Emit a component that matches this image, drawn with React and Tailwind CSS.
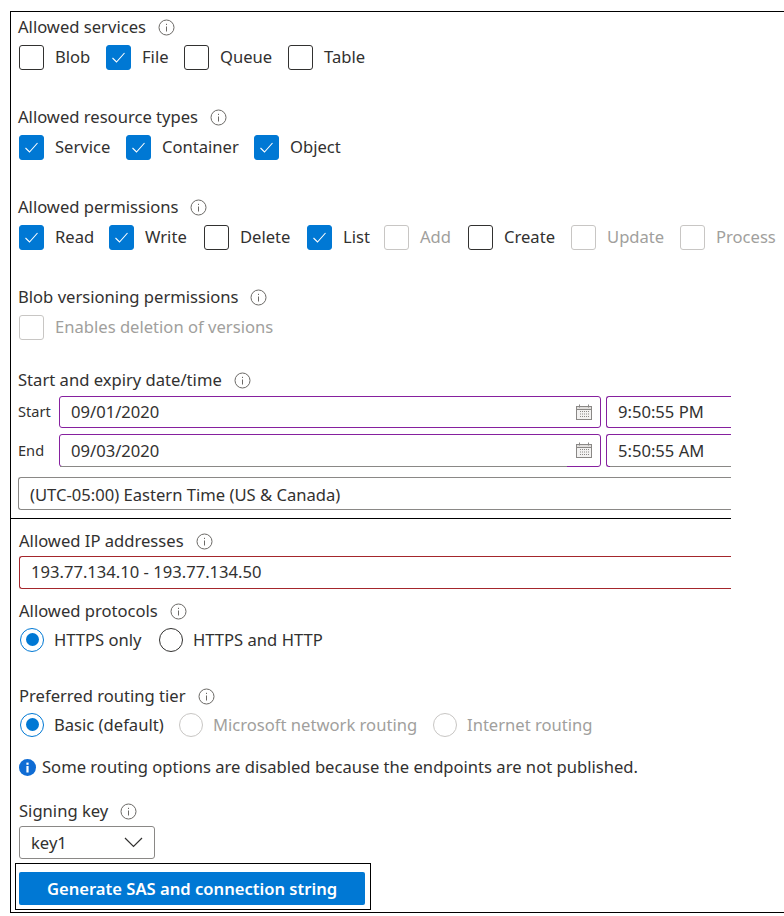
import React from 'react';

const services = [
  { label: 'Blob', width: 'w-[87px]' },
  { label: 'File', width: 'w-[78px]', checked: true },
  { label: 'Queue', width: 'w-[104px]' },
  { label: 'Table', width: 'w-[90px]' },
];

const resourceTypes = [
  { label: 'Service', width: 'w-[107px]', checked: true },
  { label: 'Container', width: 'w-[128px]', checked: true },
  { label: 'Object', width: 'w-[100px]', checked: true },
];

const permissions = [
  { label: 'Read', width: 'w-[90px]', checked: true },
  { label: 'Write', width: 'w-[95px]', checked: true },
  { label: 'Delete', width: 'w-[103px]' },
  { label: 'List', width: 'w-[77px]', checked: true },
  { label: 'Add', width: 'w-[84px]', disabled: true },
  { label: 'Create', width: 'w-[103px]' },
  { label: 'Update', width: 'w-[109px]', disabled: true },
  { label: 'Process', width: 'w-[95px]', disabled: true },
];

function InfoIcon() {
  return (
    <svg width="17" height="17" viewBox="0 0 17 17" fill="none" className="shrink-0">
      <circle cx="8.5" cy="8.5" r="7.5" stroke="#6b6966" strokeWidth="1" />
      <rect x="8" y="7.5" width="1" height="5" fill="#6b6966" />
      <rect x="8" y="4.8" width="1" height="1.2" fill="#6b6966" />
    </svg>
  );
}

function Label({ text, gap = 'gap-3' }) {
  return (
    <div className={`h-[30px] flex items-center ${gap}`}>
      <span>{text}</span>
      <InfoIcon />
    </div>
  );
}

function Checkbox({ label, width, checked, disabled }) {
  const box = checked
    ? 'bg-[#0078d4] border-[#0078d4]'
    : disabled
      ? 'border-[#c8c6c4]'
      : 'border-[#323130]';
  return (
    <div className={`${width} shrink-0 h-[30px] flex items-center gap-[11px]`}>
      <div className={`w-[25px] h-[25px] shrink-0 rounded-[3px] border flex items-center justify-center ${box}`}>
        {checked && (
          <svg width="15" height="13" viewBox="0 0 15 13" fill="none">
            <path d="M1.5 7 L5.5 11 L13.5 2" stroke="#ffffff" strokeWidth="1.1" />
          </svg>
        )}
      </div>
      <span className={disabled ? 'text-[#a19f9d]' : ''}>{label}</span>
    </div>
  );
}

function Radio({ label, checked, disabled, width }) {
  const ring = checked ? 'border-[#0078d4]' : disabled ? 'border-[#c8c6c4]' : 'border-[#323130]';
  return (
    <div className={`${width} shrink-0 h-[25px] flex items-center gap-[10px]`}>
      <div className={`w-[24px] h-[24px] shrink-0 rounded-full border flex items-center justify-center ${ring}`}>
        {checked && <div className="w-[13px] h-[13px] rounded-full bg-[#0078d4]" />}
      </div>
      <span className={`pt-[2px] ${disabled ? 'text-[#a19f9d]' : ''}`}>{label}</span>
    </div>
  );
}

function CalendarIcon() {
  return (
    <svg width="17" height="17" viewBox="0 0 17 17" fill="none" className="shrink-0">
      <rect x="0.5" y="2.5" width="15" height="13" fill="#f3f2f1" stroke="#8a8886" />
      <rect x="0.5" y="2.5" width="15" height="3" fill="#e1dfdd" stroke="#8a8886" />
      <rect x="3" y="0.5" width="1" height="3" fill="#8a8886" />
      <rect x="12" y="0.5" width="1" height="3" fill="#8a8886" />
      <path d="M4 7.5h9M4 10h9M4 12.5h9" stroke="#8a8886" strokeDasharray="1 1" />
    </svg>
  );
}

export default function App() {
  return (
    <div className="w-[784px] h-[916px] pt-[11px] pl-[10px] bg-white overflow-hidden font-['Noto_Sans',sans-serif] text-[16.6px] text-[#323130]">
      <div className="h-[902px] border-l border-y border-black">
        <div className="pl-[7px]">
          <Label text="Allowed services" />
          <div className="flex pl-px">
            {services.map(o => <Checkbox key={o.label} {...o} />)}
          </div>

          <div className="mt-[30px]">
            <Label text="Allowed resource types" />
            <div className="flex pl-px">
              {resourceTypes.map(o => <Checkbox key={o.label} {...o} />)}
            </div>
          </div>

          <div className="mt-[30px]">
            <Label text="Allowed permissions" />
            <div className="flex pl-px whitespace-nowrap">
              {permissions.map(o => <Checkbox key={o.label} {...o} />)}
            </div>
          </div>

          <div className="mt-[30px]">
            <Label text="Blob versioning permissions" />
            <div className="pl-px">
              <Checkbox label="Enables deletion of versions" width="w-[300px]" disabled />
            </div>
          </div>

          <div className="mt-[23px] w-[713px]">
            <Label text="Start and expiry date/time" />
            <div className="mt-px flex items-center h-[32px]">
              <span className="w-[41px] text-[14.6px]">Start</span>
              <div className="w-[542px] h-full rounded-[3px] border border-[#86209f] pl-[11px] pr-[7px] flex items-center justify-between">
                <span>09/01/2020</span>
                <CalendarIcon />
              </div>
              <div className="ml-[5px] flex-1 h-full rounded-l-[3px] border-l border-y border-[#86209f] pl-[11px] flex items-center">
                9:50:55 PM
              </div>
            </div>
            <div className="mt-[6px] flex items-center h-[33px]">
              <span className="w-[41px] text-[14.6px]">End</span>
              <div className="relative w-[542px] h-full rounded-[3px] border border-[#86209f] pl-[11px] pr-[7px] flex items-center justify-between">
                <span className="pt-[2px]">09/03/2020</span>
                <CalendarIcon />
                <div className="absolute left-0 -bottom-px w-[507px] h-px bg-[#8a8886]" />
              </div>
              <div className="relative ml-[5px] flex-1 h-full rounded-l-[3px] border-l border-y border-[#86209f] pl-[11px] pt-[2px] flex items-center">
                5:50:55 AM
                <div className="absolute left-[3px] right-0 -bottom-px h-px bg-[#8a8886]" />
              </div>
            </div>
            <div className="mt-[10px] h-[33px] rounded-l-[3px] border-l border-y border-[#8a8886] pl-[11px] pt-[4px] flex items-center">
              (UTC-05:00) Eastern Time (US &amp; Canada)
            </div>
          </div>
        </div>

        <div className="mt-2 w-[720px] h-px bg-black" />

        <div className="pl-2">
          <div className="mt-[7px]">
            <Label text="Allowed IP addresses" />
            <div className="w-[712px] h-[33px] rounded-l-[3px] border-l border-y border-[#a4262c] pl-[11px] flex items-center">
              193.77.134.10 - 193.77.134.50
            </div>
          </div>

          <div className="mt-[7px]">
            <Label text="Allowed protocols" />
            <div className="mt-px flex pl-px">
              <Radio label="HTTPS only" width="w-[139px]" checked />
              <Radio label="HTTPS and HTTP" width="w-[200px]" />
            </div>
          </div>

          <div className="mt-[29px]">
            <Label text="Preferred routing tier" />
            <div className="mt-px flex pl-px">
              <Radio label="Basic (default)" width="w-[159px]" checked />
              <Radio label="Microsoft network routing" width="w-[254px]" disabled />
              <Radio label="Internet routing" width="w-[170px]" disabled />
            </div>
          </div>

          <div className="mt-[15px] h-[30px] flex items-center gap-[6px]">
            <svg width="17" height="17" viewBox="0 0 17 17" className="shrink-0">
              <circle cx="8.5" cy="8.5" r="8.5" fill="#0f6cd4" />
              <rect x="7.4" y="7" width="2.2" height="6.5" fill="#ffffff" />
              <rect x="7.4" y="3.6" width="2.2" height="2.2" fill="#ffffff" />
            </svg>
            <span>Some routing options are disabled because the endpoints are not published.</span>
          </div>

          <div className="mt-[14px]">
            <Label text="Signing key" />
            <div className="w-[136px] h-[33px] rounded-[3px] border border-[#8a8886] pl-[11px] pr-[11px] flex items-center justify-between">
              <span className="pt-[2px]">key1</span>
              <svg width="19" height="11" viewBox="0 0 19 11" fill="none">
                <path d="M1 1 L9.5 9.5 L18 1" stroke="#323130" strokeWidth="1.2" />
              </svg>
            </div>
          </div>
        </div>

        <div className="mt-1 ml-1 w-[356px] h-[47px] border border-black pt-2 pl-[3px]">
          <div className="w-[346px] h-[33px] pt-[2px] rounded-[2px] bg-[#0078d4] text-white font-semibold flex items-center justify-center">
            Generate SAS and connection string
          </div>
        </div>
      </div>
    </div>
  );
}
